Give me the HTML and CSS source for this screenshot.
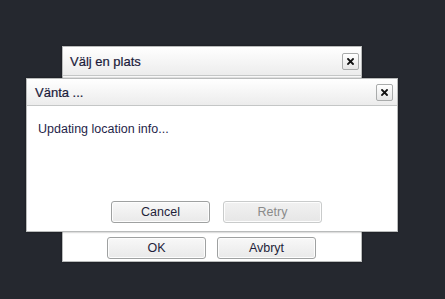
FILE: index.html
```html
<!DOCTYPE html>
<html>
<head>
<meta charset="utf-8">
<link rel="stylesheet" href="styles.css">
</head>
<body>
<div class="desk">
  <div class="dialog d1">
    <div class="titlebar">
      <span class="title">Välj en plats</span>
      <span class="close"><svg width="7" height="7" viewBox="0 0 7 7"><path d="M1 1L6 6M6 1L1 6" stroke="#111" stroke-width="1.8" stroke-linecap="square"/></svg></span>
    </div>
    <div class="content"></div>
    <div class="pane p1">
      <button class="btn">OK</button>
      <button class="btn">Avbryt</button>
    </div>
  </div>
  <div class="dialog d2">
    <div class="titlebar">
      <span class="title">Vänta ...</span>
      <span class="close"><svg width="7" height="7" viewBox="0 0 7 7"><path d="M1 1L6 6M6 1L1 6" stroke="#111" stroke-width="1.8" stroke-linecap="square"/></svg></span>
    </div>
    <div class="content"><p class="msg">Updating location info...</p></div>
    <div class="pane p2">
      <button class="btn">Cancel</button>
      <button class="btn disabled">Retry</button>
    </div>
  </div>
</div>
</body>
</html>
```
FILE: styles.css
```css
html, body {
  margin: 0;
  padding: 0;
}
body {
  background: #25282f;
  width: 445px;
  height: 299px;
  overflow: hidden;
  font-family: "Liberation Sans", Arial, sans-serif;
  font-size: 12.5px;
  color: #1f1f4a;
}
.desk {
  position: relative;
  width: 445px;
  height: 299px;
}
.dialog {
  position: absolute;
  box-sizing: border-box;
  background: #fff;
  border: 1px solid #b9bbbb;
  box-shadow: 0 0 2px rgba(0,0,0,0.4);
  display: flex;
  flex-direction: column;
}
.d1 {
  left: 62px;
  top: 46px;
  width: 300px;
  height: 216px;
}
.d2 {
  left: 26px;
  top: 78px;
  width: 372px;
  height: 154px;
}
.titlebar {
  display: flex;
  align-items: center;
  justify-content: space-between;
  background: linear-gradient(#ffffff, #ececec);
  border-bottom: 1px solid #c4c6c6;
  box-sizing: border-box;
}
.d1 .titlebar {
  height: 29px;
  padding: 0 2px 0 7px;
}
.d2 .titlebar {
  height: 27px;
  padding: 0 4px 0 8px;
}
.title {
  font-size: 13px;
  color: #1a1a3a;
  -webkit-text-stroke: 0.2px #1a1a3a;
}
.close {
  width: 17px;
  height: 17px;
  box-sizing: border-box;
  border: 1px solid #a9abab;
  border-radius: 2px;
  background: linear-gradient(#ffffff, #e6e6e6);
  display: flex;
  align-items: center;
  justify-content: center;
}
.close svg {
  display: block;
}
.content {
  flex: 1;
}
.msg {
  margin: 0;
  padding: 16px 0 0 11px;
}
.pane {
  display: flex;
}
.p1 {
  padding: 0 0 2px 44px;
  gap: 11px;
}
.p2 {
  padding: 0 0 8px 84px;
  gap: 13px;
}
.btn {
  width: 99px;
  height: 22px;
  box-sizing: border-box;
  border: 1px solid #9fa1a1;
  border-radius: 3px;
  background: linear-gradient(#f8f8f8, #e9e9e9);
  box-shadow: inset 0 0 0 1px #fdfdfd;
  font-family: "Liberation Sans", Arial, sans-serif;
  font-size: 12.5px;
  color: #1f1f3a;
  padding: 0;
}
.btn.disabled {
  color: #8a8a8a;
  border-color: #c9cbcb;
  background: linear-gradient(#f1f1f1, #e6e6e6);
}
```
